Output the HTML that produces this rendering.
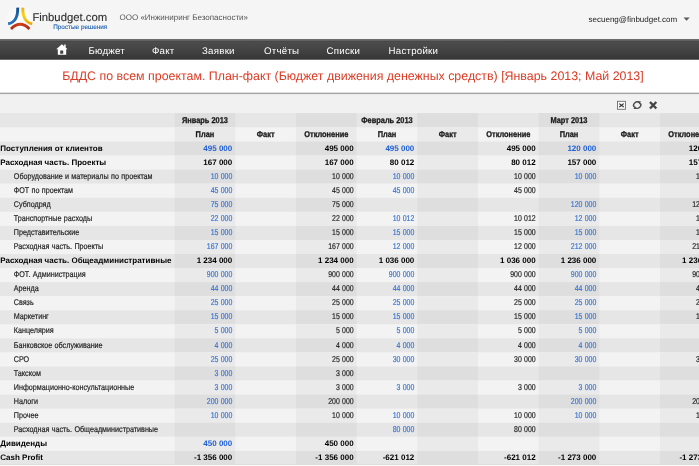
<!DOCTYPE html>
<html lang="ru"><head><meta charset="utf-8"><title>Finbudget.com</title>
<style>
html,body{margin:0;padding:0;background:#f1f1f1}
body{width:699px;height:466px;overflow:hidden}
svg{display:block;filter:blur(0.3px)}
text{font-family:"Liberation Sans",sans-serif;white-space:pre;text-rendering:geometricPrecision}
.r{font-size:8.4px;fill:#1c1c1c;stroke:#1c1c1c;stroke-width:0.18px;word-spacing:0.4px}
.b{font-size:8.0px;font-weight:bold;fill:#000}
.e{text-anchor:end}
.bl{fill:#3673d2;stroke:#3673d2}
.b.bl{fill:#1f5fd6;stroke:none}
.h{font-weight:bold;font-size:8.4px;fill:#1a1a1a;text-anchor:middle;stroke:#1a1a1a;stroke-width:0.3px}
.nv{font-size:9.7px;fill:#fff;letter-spacing:0.25px}
</style></head><body>
<svg width="699" height="466" viewBox="0 0 699 466">
<defs>
<linearGradient id="ng" x1="0" y1="0" x2="0" y2="1"><stop offset="0" stop-color="#4d4d4d"/><stop offset="0.5" stop-color="#424242"/><stop offset="1" stop-color="#353535"/></linearGradient>
<radialGradient id="halo"><stop offset="0" stop-color="#fff" stop-opacity="0.9"/><stop offset="0.6" stop-color="#fff" stop-opacity="0.6"/><stop offset="1" stop-color="#fff" stop-opacity="0"/></radialGradient>
<linearGradient id="lb" gradientUnits="userSpaceOnUse" x1="18" y1="7" x2="9" y2="24"><stop offset="0" stop-color="#164a84"/><stop offset="0.35" stop-color="#1f62ab"/><stop offset="1" stop-color="#2d74bf"/></linearGradient>
<linearGradient id="ly" gradientUnits="userSpaceOnUse" x1="22.5" y1="7" x2="32" y2="24"><stop offset="0" stop-color="#f0a81a"/><stop offset="0.4" stop-color="#f8d215"/><stop offset="1" stop-color="#efa514"/></linearGradient>
<linearGradient id="lr" gradientUnits="userSpaceOnUse" x1="11" y1="0" x2="29.4" y2="0"><stop offset="0" stop-color="#b02c14"/><stop offset="0.5" stop-color="#d4401c"/><stop offset="1" stop-color="#b02c14"/></linearGradient>
</defs>
<rect x="0" y="0" width="699" height="466" fill="#f1f1f1"/>
<rect x="0" y="0" width="699" height="39" fill="#f5f5f5"/>

<g fill="none" stroke-linecap="butt">
<ellipse cx="20.2" cy="18.5" rx="15" ry="14" fill="url(#halo)" stroke="none"/>
<path d="M17.7 7.6 C17.9 17 15.6 22.6 8.1 23.7" stroke="url(#lb)" stroke-width="2.9"/>
<path d="M22.8 7.6 C22.6 17 24.9 22.6 32.3 23.7" stroke="url(#ly)" stroke-width="2.9"/>
<path d="M11 28.9 Q20.2 19.7 29.4 28.9" stroke="url(#lr)" stroke-width="2.8"/>
</g>
<text x="32.4" y="21" style="font-size:11.3px;fill:#2e2e2e;stroke:#2e2e2e;stroke-width:0.12px">Finbudget.com</text>
<text x="53.2" y="29" style="font-size:6.4px;fill:#1a5fb0;stroke:#1a5fb0;stroke-width:0.12px">Простые решения</text>
<text x="119.5" y="20" style="font-size:8px;fill:#555">ООО «Инжиниринг Безопасности»</text>
<text x="677.2" y="22" class="e" style="font-size:8px;fill:#222">secueng@finbudget.com</text>
<path d="M683.5 17.5 L689.7 17.5 L686.6 20.8 Z" fill="#5a5a5a"/>
<rect x="0" y="42" width="699" height="17.85" fill="url(#ng)"/><rect x="0" y="39" width="699" height="1" fill="#6c6c6c"/><rect x="0" y="40" width="699" height="1" fill="#626262"/><rect x="0" y="41" width="699" height="1.1" fill="#484848"/>
<path d="M61.9 44.2 L56.2 49.3 L57.8 49.3 L57.8 54.8 L66.2 54.8 L66.2 49.3 L67.6 49.3 L65.7 47.6 L65.7 44.5 L64.2 44.5 L64.2 46.3 Z M60.2 50.5 L63.2 50.5 L63.2 53.8 L60.2 53.8 Z" fill="#fff" fill-rule="evenodd"/>
<text class="nv" x="88.5" y="54">Бюджет</text>
<text class="nv" x="152" y="54">Факт</text>
<text class="nv" x="202" y="54">Заявки</text>
<text class="nv" x="264" y="54">Отчёты</text>
<text class="nv" x="326.5" y="54">Списки</text>
<text class="nv" x="388.5" y="54">Настройки</text>
<rect x="0" y="59.85" width="699" height="33" fill="#fff"/>
<rect x="0" y="92.65" width="699" height="1.45" fill="#a4a4a4"/>
<text x="62.2" y="80" style="font-size:12.4px;fill:#db3c26">БДДС по всем проектам. План-факт (Бюджет движения денежных средств) [Январь 2013; Май 2013]</text>
<g>
<rect x="617.5" y="101.3" width="8" height="8" fill="#f8f8f8" stroke="#6e6e6e" stroke-width="0.9"/>
<path d="M619.3 103.6 L623.7 107 M623.7 103.6 L619.3 107" stroke="#333" stroke-width="1.2" fill="none"/>
<g transform="rotate(-18 637.2 105.1)">
<path d="M633.7 105.9 A3.5 3.1 0 0 1 639.9 103.2 M640.7 104.3 A3.5 3.1 0 0 1 634.5 107" stroke="#4a4a4a" stroke-width="1.35" fill="none"/>
<path d="M638.6 101.6 L641.8 102.6 L639.8 105.2 Z M635.8 108.6 L632.6 107.6 L634.6 105 Z" fill="#4a4a4a"/>
</g>
<path d="M650 102 L656.3 108.5 M656.3 102 L650 108.5" stroke="#454545" stroke-width="2.4" fill="none"/>
</g>
<g shape-rendering="geometricPrecision">
<rect x="0" y="113.1" width="699" height="14.4" fill="#e6e6e6"/><rect x="174.6" y="113.1" width="60.67" height="14.4" fill="#dedede"/><rect x="295.95" y="113.1" width="60.67" height="14.4" fill="#dedede"/><rect x="417.3" y="113.1" width="60.67" height="14.4" fill="#dedede"/><rect x="538.65" y="113.1" width="60.67" height="14.4" fill="#dedede"/><rect x="660" y="113.1" width="60.67" height="14.4" fill="#dedede"/>
<rect x="0" y="127.5" width="699" height="14.05" fill="#f3f3f3"/><rect x="174.6" y="127.5" width="60.67" height="14.05" fill="#eaeaea"/><rect x="295.95" y="127.5" width="60.67" height="14.05" fill="#eaeaea"/><rect x="417.3" y="127.5" width="60.67" height="14.05" fill="#eaeaea"/><rect x="538.65" y="127.5" width="60.67" height="14.05" fill="#eaeaea"/><rect x="660" y="127.5" width="60.67" height="14.05" fill="#eaeaea"/>
<rect x="0" y="141.55" width="699" height="14.06" fill="#e6e6e6"/><rect x="174.6" y="141.55" width="60.67" height="14.06" fill="#dedede"/><rect x="295.95" y="141.55" width="60.67" height="14.06" fill="#dedede"/><rect x="417.3" y="141.55" width="60.67" height="14.06" fill="#dedede"/><rect x="538.65" y="141.55" width="60.67" height="14.06" fill="#dedede"/><rect x="660" y="141.55" width="60.67" height="14.06" fill="#dedede"/>
<rect x="0" y="155.61" width="699" height="14.06" fill="#f3f3f3"/><rect x="174.6" y="155.61" width="60.67" height="14.06" fill="#eaeaea"/><rect x="295.95" y="155.61" width="60.67" height="14.06" fill="#eaeaea"/><rect x="417.3" y="155.61" width="60.67" height="14.06" fill="#eaeaea"/><rect x="538.65" y="155.61" width="60.67" height="14.06" fill="#eaeaea"/><rect x="660" y="155.61" width="60.67" height="14.06" fill="#eaeaea"/>
<rect x="0" y="169.68" width="699" height="14.06" fill="#e6e6e6"/><rect x="174.6" y="169.68" width="60.67" height="14.06" fill="#dedede"/><rect x="295.95" y="169.68" width="60.67" height="14.06" fill="#dedede"/><rect x="417.3" y="169.68" width="60.67" height="14.06" fill="#dedede"/><rect x="538.65" y="169.68" width="60.67" height="14.06" fill="#dedede"/><rect x="660" y="169.68" width="60.67" height="14.06" fill="#dedede"/>
<rect x="0" y="183.74" width="699" height="14.06" fill="#f3f3f3"/><rect x="174.6" y="183.74" width="60.67" height="14.06" fill="#eaeaea"/><rect x="295.95" y="183.74" width="60.67" height="14.06" fill="#eaeaea"/><rect x="417.3" y="183.74" width="60.67" height="14.06" fill="#eaeaea"/><rect x="538.65" y="183.74" width="60.67" height="14.06" fill="#eaeaea"/><rect x="660" y="183.74" width="60.67" height="14.06" fill="#eaeaea"/>
<rect x="0" y="197.8" width="699" height="14.06" fill="#e6e6e6"/><rect x="174.6" y="197.8" width="60.67" height="14.06" fill="#dedede"/><rect x="295.95" y="197.8" width="60.67" height="14.06" fill="#dedede"/><rect x="417.3" y="197.8" width="60.67" height="14.06" fill="#dedede"/><rect x="538.65" y="197.8" width="60.67" height="14.06" fill="#dedede"/><rect x="660" y="197.8" width="60.67" height="14.06" fill="#dedede"/>
<rect x="0" y="211.87" width="699" height="14.06" fill="#f3f3f3"/><rect x="174.6" y="211.87" width="60.67" height="14.06" fill="#eaeaea"/><rect x="295.95" y="211.87" width="60.67" height="14.06" fill="#eaeaea"/><rect x="417.3" y="211.87" width="60.67" height="14.06" fill="#eaeaea"/><rect x="538.65" y="211.87" width="60.67" height="14.06" fill="#eaeaea"/><rect x="660" y="211.87" width="60.67" height="14.06" fill="#eaeaea"/>
<rect x="0" y="225.93" width="699" height="14.06" fill="#e6e6e6"/><rect x="174.6" y="225.93" width="60.67" height="14.06" fill="#dedede"/><rect x="295.95" y="225.93" width="60.67" height="14.06" fill="#dedede"/><rect x="417.3" y="225.93" width="60.67" height="14.06" fill="#dedede"/><rect x="538.65" y="225.93" width="60.67" height="14.06" fill="#dedede"/><rect x="660" y="225.93" width="60.67" height="14.06" fill="#dedede"/>
<rect x="0" y="239.99" width="699" height="14.06" fill="#f3f3f3"/><rect x="174.6" y="239.99" width="60.67" height="14.06" fill="#eaeaea"/><rect x="295.95" y="239.99" width="60.67" height="14.06" fill="#eaeaea"/><rect x="417.3" y="239.99" width="60.67" height="14.06" fill="#eaeaea"/><rect x="538.65" y="239.99" width="60.67" height="14.06" fill="#eaeaea"/><rect x="660" y="239.99" width="60.67" height="14.06" fill="#eaeaea"/>
<rect x="0" y="254.05" width="699" height="14.06" fill="#e6e6e6"/><rect x="174.6" y="254.05" width="60.67" height="14.06" fill="#dedede"/><rect x="295.95" y="254.05" width="60.67" height="14.06" fill="#dedede"/><rect x="417.3" y="254.05" width="60.67" height="14.06" fill="#dedede"/><rect x="538.65" y="254.05" width="60.67" height="14.06" fill="#dedede"/><rect x="660" y="254.05" width="60.67" height="14.06" fill="#dedede"/>
<rect x="0" y="268.12" width="699" height="14.06" fill="#f3f3f3"/><rect x="174.6" y="268.12" width="60.67" height="14.06" fill="#eaeaea"/><rect x="295.95" y="268.12" width="60.67" height="14.06" fill="#eaeaea"/><rect x="417.3" y="268.12" width="60.67" height="14.06" fill="#eaeaea"/><rect x="538.65" y="268.12" width="60.67" height="14.06" fill="#eaeaea"/><rect x="660" y="268.12" width="60.67" height="14.06" fill="#eaeaea"/>
<rect x="0" y="282.18" width="699" height="14.06" fill="#e6e6e6"/><rect x="174.6" y="282.18" width="60.67" height="14.06" fill="#dedede"/><rect x="295.95" y="282.18" width="60.67" height="14.06" fill="#dedede"/><rect x="417.3" y="282.18" width="60.67" height="14.06" fill="#dedede"/><rect x="538.65" y="282.18" width="60.67" height="14.06" fill="#dedede"/><rect x="660" y="282.18" width="60.67" height="14.06" fill="#dedede"/>
<rect x="0" y="296.24" width="699" height="14.06" fill="#f3f3f3"/><rect x="174.6" y="296.24" width="60.67" height="14.06" fill="#eaeaea"/><rect x="295.95" y="296.24" width="60.67" height="14.06" fill="#eaeaea"/><rect x="417.3" y="296.24" width="60.67" height="14.06" fill="#eaeaea"/><rect x="538.65" y="296.24" width="60.67" height="14.06" fill="#eaeaea"/><rect x="660" y="296.24" width="60.67" height="14.06" fill="#eaeaea"/>
<rect x="0" y="310.31" width="699" height="14.06" fill="#e6e6e6"/><rect x="174.6" y="310.31" width="60.67" height="14.06" fill="#dedede"/><rect x="295.95" y="310.31" width="60.67" height="14.06" fill="#dedede"/><rect x="417.3" y="310.31" width="60.67" height="14.06" fill="#dedede"/><rect x="538.65" y="310.31" width="60.67" height="14.06" fill="#dedede"/><rect x="660" y="310.31" width="60.67" height="14.06" fill="#dedede"/>
<rect x="0" y="324.37" width="699" height="14.06" fill="#f3f3f3"/><rect x="174.6" y="324.37" width="60.67" height="14.06" fill="#eaeaea"/><rect x="295.95" y="324.37" width="60.67" height="14.06" fill="#eaeaea"/><rect x="417.3" y="324.37" width="60.67" height="14.06" fill="#eaeaea"/><rect x="538.65" y="324.37" width="60.67" height="14.06" fill="#eaeaea"/><rect x="660" y="324.37" width="60.67" height="14.06" fill="#eaeaea"/>
<rect x="0" y="338.43" width="699" height="14.06" fill="#e6e6e6"/><rect x="174.6" y="338.43" width="60.67" height="14.06" fill="#dedede"/><rect x="295.95" y="338.43" width="60.67" height="14.06" fill="#dedede"/><rect x="417.3" y="338.43" width="60.67" height="14.06" fill="#dedede"/><rect x="538.65" y="338.43" width="60.67" height="14.06" fill="#dedede"/><rect x="660" y="338.43" width="60.67" height="14.06" fill="#dedede"/>
<rect x="0" y="352.5" width="699" height="14.06" fill="#f3f3f3"/><rect x="174.6" y="352.5" width="60.67" height="14.06" fill="#eaeaea"/><rect x="295.95" y="352.5" width="60.67" height="14.06" fill="#eaeaea"/><rect x="417.3" y="352.5" width="60.67" height="14.06" fill="#eaeaea"/><rect x="538.65" y="352.5" width="60.67" height="14.06" fill="#eaeaea"/><rect x="660" y="352.5" width="60.67" height="14.06" fill="#eaeaea"/>
<rect x="0" y="366.56" width="699" height="14.06" fill="#e6e6e6"/><rect x="174.6" y="366.56" width="60.67" height="14.06" fill="#dedede"/><rect x="295.95" y="366.56" width="60.67" height="14.06" fill="#dedede"/><rect x="417.3" y="366.56" width="60.67" height="14.06" fill="#dedede"/><rect x="538.65" y="366.56" width="60.67" height="14.06" fill="#dedede"/><rect x="660" y="366.56" width="60.67" height="14.06" fill="#dedede"/>
<rect x="0" y="380.62" width="699" height="14.06" fill="#f3f3f3"/><rect x="174.6" y="380.62" width="60.67" height="14.06" fill="#eaeaea"/><rect x="295.95" y="380.62" width="60.67" height="14.06" fill="#eaeaea"/><rect x="417.3" y="380.62" width="60.67" height="14.06" fill="#eaeaea"/><rect x="538.65" y="380.62" width="60.67" height="14.06" fill="#eaeaea"/><rect x="660" y="380.62" width="60.67" height="14.06" fill="#eaeaea"/>
<rect x="0" y="394.68" width="699" height="14.06" fill="#e6e6e6"/><rect x="174.6" y="394.68" width="60.67" height="14.06" fill="#dedede"/><rect x="295.95" y="394.68" width="60.67" height="14.06" fill="#dedede"/><rect x="417.3" y="394.68" width="60.67" height="14.06" fill="#dedede"/><rect x="538.65" y="394.68" width="60.67" height="14.06" fill="#dedede"/><rect x="660" y="394.68" width="60.67" height="14.06" fill="#dedede"/>
<rect x="0" y="408.75" width="699" height="14.06" fill="#f3f3f3"/><rect x="174.6" y="408.75" width="60.67" height="14.06" fill="#eaeaea"/><rect x="295.95" y="408.75" width="60.67" height="14.06" fill="#eaeaea"/><rect x="417.3" y="408.75" width="60.67" height="14.06" fill="#eaeaea"/><rect x="538.65" y="408.75" width="60.67" height="14.06" fill="#eaeaea"/><rect x="660" y="408.75" width="60.67" height="14.06" fill="#eaeaea"/>
<rect x="0" y="422.81" width="699" height="14.06" fill="#e6e6e6"/><rect x="174.6" y="422.81" width="60.67" height="14.06" fill="#dedede"/><rect x="295.95" y="422.81" width="60.67" height="14.06" fill="#dedede"/><rect x="417.3" y="422.81" width="60.67" height="14.06" fill="#dedede"/><rect x="538.65" y="422.81" width="60.67" height="14.06" fill="#dedede"/><rect x="660" y="422.81" width="60.67" height="14.06" fill="#dedede"/>
<rect x="0" y="436.87" width="699" height="14.06" fill="#f3f3f3"/><rect x="174.6" y="436.87" width="60.67" height="14.06" fill="#eaeaea"/><rect x="295.95" y="436.87" width="60.67" height="14.06" fill="#eaeaea"/><rect x="417.3" y="436.87" width="60.67" height="14.06" fill="#eaeaea"/><rect x="538.65" y="436.87" width="60.67" height="14.06" fill="#eaeaea"/><rect x="660" y="436.87" width="60.67" height="14.06" fill="#eaeaea"/>
<rect x="0" y="450.94" width="699" height="14.06" fill="#e6e6e6"/><rect x="174.6" y="450.94" width="60.67" height="14.06" fill="#dedede"/><rect x="295.95" y="450.94" width="60.67" height="14.06" fill="#dedede"/><rect x="417.3" y="450.94" width="60.67" height="14.06" fill="#dedede"/><rect x="538.65" y="450.94" width="60.67" height="14.06" fill="#dedede"/><rect x="660" y="450.94" width="60.67" height="14.06" fill="#dedede"/>
<rect x="0" y="465" width="699" height="3" fill="#fcfcf9"/><rect x="0" y="464.1" width="699" height="0.9" fill="#dddddd"/>
</g>
<text class="h" transform="translate(204.94 123) scale(0.885 1)">Январь 2013</text>
<text class="h" transform="translate(386.96 123) scale(0.885 1)">Февраль 2013</text>
<text class="h" transform="translate(568.99 123) scale(0.885 1)">Март 2013</text>
<text class="h" transform="translate(204.94 137) scale(0.885 1)">План</text>
<text class="h" transform="translate(265.61 137) scale(0.885 1)">Факт</text>
<text class="h" transform="translate(326.29 137) scale(0.885 1)">Отклонение</text>
<text class="h" transform="translate(386.96 137) scale(0.885 1)">План</text>
<text class="h" transform="translate(447.64 137) scale(0.885 1)">Факт</text>
<text class="h" transform="translate(508.31 137) scale(0.885 1)">Отклонение</text>
<text class="h" transform="translate(568.99 137) scale(0.885 1)">План</text>
<text class="h" transform="translate(629.66 137) scale(0.885 1)">Факт</text>
<text class="h" transform="translate(690.34 137) scale(0.885 1)">Отклонение</text>
<text class="b" x="0.3" y="151">Поступления от клиентов</text>
<text class="b e bl" x="232.27" y="151">495 000</text>
<text class="b e" x="353.62" y="151">495 000</text>
<text class="b e bl" x="414.3" y="151">495 000</text>
<text class="b e" x="535.65" y="151">495 000</text>
<text class="b e bl" x="596.32" y="151">120 000</text>
<text class="b e" x="717.67" y="151">120 000</text>
<text class="b" x="0.3" y="165">Расходная часть. Проекты</text>
<text class="b e" x="232.27" y="165">167 000</text>
<text class="b e" x="353.62" y="165">167 000</text>
<text class="b e" x="414.3" y="165">80 012</text>
<text class="b e" x="535.65" y="165">80 012</text>
<text class="b e" x="596.32" y="165">157 000</text>
<text class="b e" x="717.67" y="165">157 000</text>
<text class="r" transform="translate(13.8 179) scale(0.858 1)">Оборудование и материалы по проектам</text>
<text class="r e bl" transform="translate(232.27 179) scale(0.83 1)">10 000</text>
<text class="r e" transform="translate(353.62 179) scale(0.83 1)">10 000</text>
<text class="r e bl" transform="translate(414.3 179) scale(0.83 1)">10 000</text>
<text class="r e" transform="translate(535.65 179) scale(0.83 1)">10 000</text>
<text class="r e bl" transform="translate(596.32 179) scale(0.83 1)">10 000</text>
<text class="r e" transform="translate(717.67 179) scale(0.83 1)">10 000</text>
<text class="r" transform="translate(13.8 193) scale(0.858 1)">ФОТ по проектам</text>
<text class="r e bl" transform="translate(232.27 193) scale(0.83 1)">45 000</text>
<text class="r e" transform="translate(353.62 193) scale(0.83 1)">45 000</text>
<text class="r e bl" transform="translate(414.3 193) scale(0.83 1)">45 000</text>
<text class="r e" transform="translate(535.65 193) scale(0.83 1)">45 000</text>
<text class="r" transform="translate(13.8 207) scale(0.858 1)">Субподряд</text>
<text class="r e bl" transform="translate(232.27 207) scale(0.83 1)">75 000</text>
<text class="r e" transform="translate(353.62 207) scale(0.83 1)">75 000</text>
<text class="r e bl" transform="translate(596.32 207) scale(0.83 1)">120 000</text>
<text class="r e" transform="translate(717.67 207) scale(0.83 1)">120 000</text>
<text class="r" transform="translate(13.8 221) scale(0.858 1)">Транспортные расходы</text>
<text class="r e bl" transform="translate(232.27 221) scale(0.83 1)">22 000</text>
<text class="r e" transform="translate(353.62 221) scale(0.83 1)">22 000</text>
<text class="r e bl" transform="translate(414.3 221) scale(0.83 1)">10 012</text>
<text class="r e" transform="translate(535.65 221) scale(0.83 1)">10 012</text>
<text class="r e bl" transform="translate(596.32 221) scale(0.83 1)">12 000</text>
<text class="r e" transform="translate(717.67 221) scale(0.83 1)">12 000</text>
<text class="r" transform="translate(13.8 235) scale(0.858 1)">Представительские</text>
<text class="r e bl" transform="translate(232.27 235) scale(0.83 1)">15 000</text>
<text class="r e" transform="translate(353.62 235) scale(0.83 1)">15 000</text>
<text class="r e bl" transform="translate(414.3 235) scale(0.83 1)">15 000</text>
<text class="r e" transform="translate(535.65 235) scale(0.83 1)">15 000</text>
<text class="r e bl" transform="translate(596.32 235) scale(0.83 1)">15 000</text>
<text class="r e" transform="translate(717.67 235) scale(0.83 1)">15 000</text>
<text class="r" transform="translate(13.8 249) scale(0.858 1)">Расходная часть. Проекты</text>
<text class="r e bl" transform="translate(232.27 249) scale(0.83 1)">167 000</text>
<text class="r e" transform="translate(353.62 249) scale(0.83 1)">167 000</text>
<text class="r e bl" transform="translate(414.3 249) scale(0.83 1)">12 000</text>
<text class="r e" transform="translate(535.65 249) scale(0.83 1)">12 000</text>
<text class="r e bl" transform="translate(596.32 249) scale(0.83 1)">212 000</text>
<text class="r e" transform="translate(717.67 249) scale(0.83 1)">212 000</text>
<text class="b" x="0.3" y="263">Расходная часть. Общеадминистративные</text>
<text class="b e" x="232.27" y="263">1 234 000</text>
<text class="b e" x="353.62" y="263">1 234 000</text>
<text class="b e" x="414.3" y="263">1 036 000</text>
<text class="b e" x="535.65" y="263">1 036 000</text>
<text class="b e" x="596.32" y="263">1 236 000</text>
<text class="b e" x="717.67" y="263">1 236 000</text>
<text class="r" transform="translate(13.8 277) scale(0.858 1)">ФОТ. Администрация</text>
<text class="r e bl" transform="translate(232.27 277) scale(0.83 1)">900 000</text>
<text class="r e" transform="translate(353.62 277) scale(0.83 1)">900 000</text>
<text class="r e bl" transform="translate(414.3 277) scale(0.83 1)">900 000</text>
<text class="r e" transform="translate(535.65 277) scale(0.83 1)">900 000</text>
<text class="r e bl" transform="translate(596.32 277) scale(0.83 1)">900 000</text>
<text class="r e" transform="translate(717.67 277) scale(0.83 1)">900 000</text>
<text class="r" transform="translate(13.8 291) scale(0.858 1)">Аренда</text>
<text class="r e bl" transform="translate(232.27 291) scale(0.83 1)">44 000</text>
<text class="r e" transform="translate(353.62 291) scale(0.83 1)">44 000</text>
<text class="r e bl" transform="translate(414.3 291) scale(0.83 1)">44 000</text>
<text class="r e" transform="translate(535.65 291) scale(0.83 1)">44 000</text>
<text class="r e bl" transform="translate(596.32 291) scale(0.83 1)">44 000</text>
<text class="r e" transform="translate(717.67 291) scale(0.83 1)">44 000</text>
<text class="r" transform="translate(13.8 305) scale(0.858 1)">Связь</text>
<text class="r e bl" transform="translate(232.27 305) scale(0.83 1)">25 000</text>
<text class="r e" transform="translate(353.62 305) scale(0.83 1)">25 000</text>
<text class="r e bl" transform="translate(414.3 305) scale(0.83 1)">25 000</text>
<text class="r e" transform="translate(535.65 305) scale(0.83 1)">25 000</text>
<text class="r e bl" transform="translate(596.32 305) scale(0.83 1)">25 000</text>
<text class="r e" transform="translate(717.67 305) scale(0.83 1)">25 000</text>
<text class="r" transform="translate(13.8 319) scale(0.858 1)">Маркетинг</text>
<text class="r e bl" transform="translate(232.27 319) scale(0.83 1)">15 000</text>
<text class="r e" transform="translate(353.62 319) scale(0.83 1)">15 000</text>
<text class="r e bl" transform="translate(414.3 319) scale(0.83 1)">15 000</text>
<text class="r e" transform="translate(535.65 319) scale(0.83 1)">15 000</text>
<text class="r e bl" transform="translate(596.32 319) scale(0.83 1)">15 000</text>
<text class="r e" transform="translate(717.67 319) scale(0.83 1)">15 000</text>
<text class="r" transform="translate(13.8 333) scale(0.858 1)">Канцелярия</text>
<text class="r e bl" transform="translate(232.27 333) scale(0.83 1)">5 000</text>
<text class="r e" transform="translate(353.62 333) scale(0.83 1)">5 000</text>
<text class="r e bl" transform="translate(414.3 333) scale(0.83 1)">5 000</text>
<text class="r e" transform="translate(535.65 333) scale(0.83 1)">5 000</text>
<text class="r e bl" transform="translate(596.32 333) scale(0.83 1)">5 000</text>
<text class="r e" transform="translate(717.67 333) scale(0.83 1)">5 000</text>
<text class="r" transform="translate(13.8 348) scale(0.858 1)">Банковское обслуживание</text>
<text class="r e bl" transform="translate(232.27 348) scale(0.83 1)">4 000</text>
<text class="r e" transform="translate(353.62 348) scale(0.83 1)">4 000</text>
<text class="r e bl" transform="translate(414.3 348) scale(0.83 1)">4 000</text>
<text class="r e" transform="translate(535.65 348) scale(0.83 1)">4 000</text>
<text class="r e bl" transform="translate(596.32 348) scale(0.83 1)">4 000</text>
<text class="r e" transform="translate(717.67 348) scale(0.83 1)">4 000</text>
<text class="r" transform="translate(13.8 362) scale(0.858 1)">СРО</text>
<text class="r e bl" transform="translate(232.27 362) scale(0.83 1)">25 000</text>
<text class="r e" transform="translate(353.62 362) scale(0.83 1)">25 000</text>
<text class="r e bl" transform="translate(414.3 362) scale(0.83 1)">30 000</text>
<text class="r e" transform="translate(535.65 362) scale(0.83 1)">30 000</text>
<text class="r e bl" transform="translate(596.32 362) scale(0.83 1)">30 000</text>
<text class="r e" transform="translate(717.67 362) scale(0.83 1)">30 000</text>
<text class="r" transform="translate(13.8 376) scale(0.858 1)">Такском</text>
<text class="r e bl" transform="translate(232.27 376) scale(0.83 1)">3 000</text>
<text class="r e" transform="translate(353.62 376) scale(0.83 1)">3 000</text>
<text class="r" transform="translate(13.8 390) scale(0.858 1)">Информационно-консультационные</text>
<text class="r e bl" transform="translate(232.27 390) scale(0.83 1)">3 000</text>
<text class="r e" transform="translate(353.62 390) scale(0.83 1)">3 000</text>
<text class="r e bl" transform="translate(414.3 390) scale(0.83 1)">3 000</text>
<text class="r e" transform="translate(535.65 390) scale(0.83 1)">3 000</text>
<text class="r e bl" transform="translate(596.32 390) scale(0.83 1)">3 000</text>
<text class="r e" transform="translate(717.67 390) scale(0.83 1)">3 000</text>
<text class="r" transform="translate(13.8 404) scale(0.858 1)">Налоги</text>
<text class="r e bl" transform="translate(232.27 404) scale(0.83 1)">200 000</text>
<text class="r e" transform="translate(353.62 404) scale(0.83 1)">200 000</text>
<text class="r e bl" transform="translate(596.32 404) scale(0.83 1)">200 000</text>
<text class="r e" transform="translate(717.67 404) scale(0.83 1)">200 000</text>
<text class="r" transform="translate(13.8 418) scale(0.858 1)">Прочее</text>
<text class="r e bl" transform="translate(232.27 418) scale(0.83 1)">10 000</text>
<text class="r e" transform="translate(353.62 418) scale(0.83 1)">10 000</text>
<text class="r e bl" transform="translate(414.3 418) scale(0.83 1)">10 000</text>
<text class="r e" transform="translate(535.65 418) scale(0.83 1)">10 000</text>
<text class="r e bl" transform="translate(596.32 418) scale(0.83 1)">10 000</text>
<text class="r e" transform="translate(717.67 418) scale(0.83 1)">10 000</text>
<text class="r" transform="translate(13.8 432) scale(0.858 1)">Расходная часть. Общеадминистративные</text>
<text class="r e bl" transform="translate(414.3 432) scale(0.83 1)">80 000</text>
<text class="r e" transform="translate(535.65 432) scale(0.83 1)">80 000</text>
<text class="b" x="0.3" y="446">Дивиденды</text>
<text class="b e bl" x="232.27" y="446">450 000</text>
<text class="b e" x="353.62" y="446">450 000</text>
<text class="b" x="0.3" y="460">Cash Profit</text>
<text class="b e" x="232.27" y="460">-1 356 000</text>
<text class="b e" x="353.62" y="460">-1 356 000</text>
<text class="b e" x="414.3" y="460">-621 012</text>
<text class="b e" x="535.65" y="460">-621 012</text>
<text class="b e" x="596.32" y="460">-1 273 000</text>
<text class="b e" x="717.67" y="460">-1 273 000</text>
</svg></body></html>
